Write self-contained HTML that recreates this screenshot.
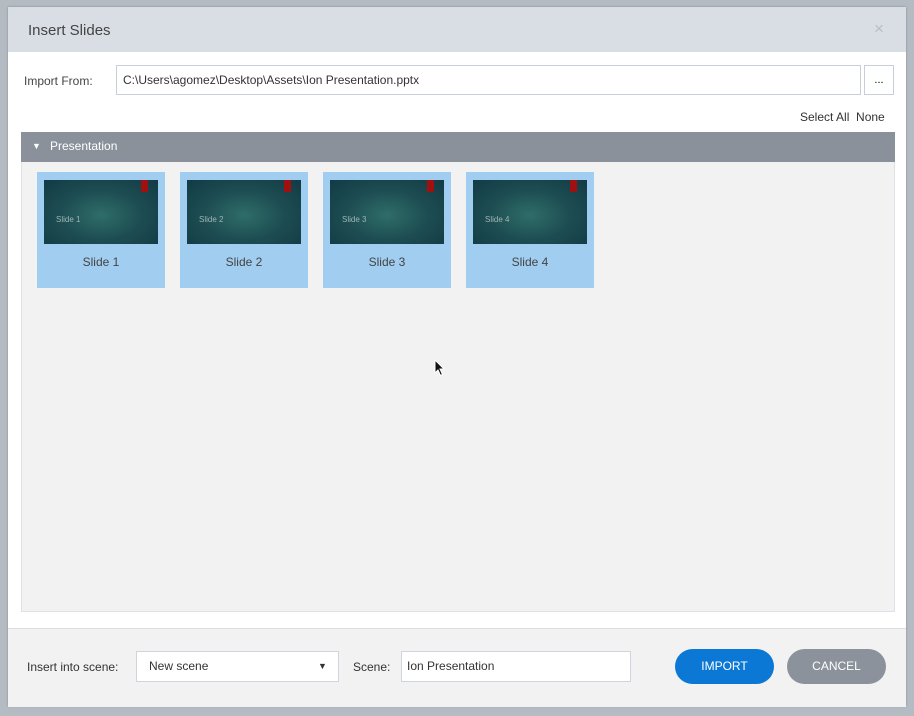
<!DOCTYPE html>
<html><head><style>
body{margin:0;width:914px;height:716px;background:#b4bbc3;font-family:"Liberation Sans",sans-serif;position:relative;overflow:hidden}
.dlg{position:absolute;left:8px;top:7px;width:898px;height:699px;background:#fff;box-shadow:0 0 2px #888}
.hdr{position:absolute;left:0;top:0;width:898px;height:45px;background:#d9dee5}
.t{position:absolute;font-size:13px;color:#333;white-space:nowrap}
.thumb{position:absolute;width:128px;height:116px;background:#a1cdf0}
.img{position:absolute;left:7px;top:8px;width:114px;height:64px;background:radial-gradient(ellipse at 50% 55%,#2f6d68 0%,#1d4d52 50%,#123a45 100%)}
.red{position:absolute;right:10px;top:0;width:7px;height:12px;background:#a01010}
.sl{position:absolute;left:12px;top:35px;font-size:8px;color:#9fb5b3}
.cap{position:absolute;left:0;width:128px;top:83px;text-align:center;font-size:12px;color:#444}
.btn{position:absolute;top:642px;height:35px;border-radius:18px;color:#fff;font-size:12px;text-align:center;line-height:35px}
</style></head><body>
<div class="dlg">
<div class="hdr"></div>
<div class="t" style="left:20px;top:15px;font-size:15px;color:#444">Insert Slides</div>
<div class="t" style="left:866px;top:12px;font-size:17px;color:#b8bec6">×</div>
<div class="t" style="left:16px;top:67px;font-size:12px;color:#444">Import From:</div>
<div style="position:absolute;left:108px;top:58px;width:743px;height:28px;border:1px solid #c8cfd8;background:#fff"></div>
<div class="t" style="left:115px;top:66px;font-size:12px;color:#333">C:\Users\agomez\Desktop\Assets\Ion Presentation.pptx</div>
<div style="position:absolute;left:856px;top:58px;width:28px;height:28px;border:1px solid #c8cfd8;text-align:center;font-size:11px;line-height:28px">...</div>
<div class="t" style="left:792px;top:103px;font-size:12px;color:#333">Select All&nbsp; None</div>
<div style="position:absolute;left:13px;top:125px;width:872px;height:479px;background:#f2f2f2;border:1px solid #dde2e8;border-top:none"></div>
<div style="position:absolute;left:13px;top:125px;width:874px;height:30px;background:#8a919b"></div>
<div class="t" style="left:24px;top:134px;font-size:9px;color:#fff">▼</div>
<div class="t" style="left:42px;top:132px;font-size:12px;color:#fff">Presentation</div>
<div class="thumb" style="left:29px;top:165px"><div class="img"><div class="red"></div><div class="sl">Slide 1</div></div><div class="cap">Slide 1</div></div>
<div class="thumb" style="left:172px;top:165px"><div class="img"><div class="red"></div><div class="sl">Slide 2</div></div><div class="cap">Slide 2</div></div>
<div class="thumb" style="left:315px;top:165px"><div class="img"><div class="red"></div><div class="sl">Slide 3</div></div><div class="cap">Slide 3</div></div>
<div class="thumb" style="left:458px;top:165px"><div class="img"><div class="red"></div><div class="sl">Slide 4</div></div><div class="cap">Slide 4</div></div>
<div style="position:absolute;left:0;top:621px;width:898px;height:78px;background:#f2f2f2;border-top:1px solid #d9dee5"></div>
<div class="t" style="left:19px;top:653px;font-size:12px;color:#333">Insert into scene:</div>
<div style="position:absolute;left:128px;top:644px;width:201px;height:29px;background:#fff;border:1px solid #cfd5dc"></div>
<div class="t" style="left:141px;top:652px;font-size:12px;color:#333">New scene</div>
<div class="t" style="left:310px;top:654px;font-size:9px;color:#333">▼</div>
<div class="t" style="left:345px;top:653px;font-size:12px;color:#333">Scene:</div>
<div style="position:absolute;left:393px;top:644px;width:228px;height:29px;background:#fff;border:1px solid #cfd5dc"></div>
<div class="t" style="left:399px;top:652px;font-size:12px;color:#333">Ion Presentation</div>
<div class="btn" style="left:667px;width:99px;background:#0a78d4">IMPORT</div>
<div class="btn" style="left:779px;width:99px;background:#8b929b">CANCEL</div>
</div>
<svg style="position:absolute;left:434px;top:359px" width="12" height="18" viewBox="0 0 12 18"><path d="M1 1 L1 14 L4 11 L6.5 16.5 L8.5 15.5 L6 10 L10 10 Z" fill="#111" stroke="#fff" stroke-width="1"/></svg>
</body></html>
